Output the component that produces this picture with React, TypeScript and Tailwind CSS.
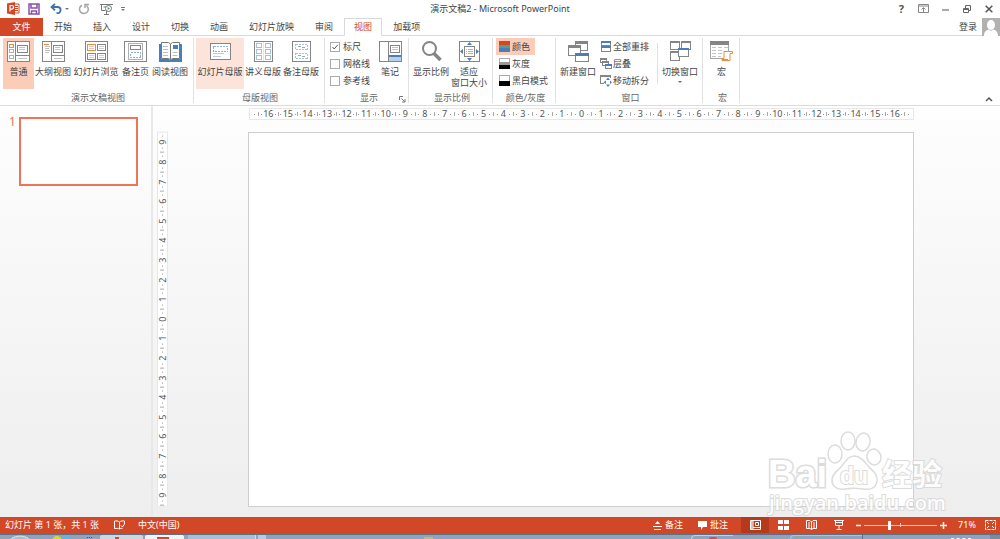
import React, { useState } from "react";
import clsx from "clsx";

const G = "#858585";
const BLUE = "#4a7ebb";
const PALE = "#8db0d8";

/* ---------- large ribbon icons, all drawn on a 23x21 grid ---------- */

const Big: React.FC<{ children: React.ReactNode }> = ({ children }) => (
  <svg width="23" height="21" viewBox="0 0 23 21" fill="none" className="shrink-0" shapeRendering="crispEdges" aria-hidden="true">
    {children}
  </svg>
);

const NormalIcon = () => (
  <Big>
    <path d="M.5.5h22v20H.5zM8.5.5v20M8.5 14.5h14" fill="#fff" stroke={G} />
    <path d="M10.500 4.500h10v7h-10z" stroke={G} />
    <path d="M12 6.500h6M12 8.500h6M11 17.500h9" stroke="#c4c4c4" />
    <path d="M2.500 3.500h4v3h-4z" stroke="#ed8b3b" />
    <path d="M2.500 8.500h4v3h-4zM2.500 14.500h4v3h-4z" stroke="#b0b0b0" />
  </Big>
);

const OutlineIcon = () => (
  <Big>
    <path d="M.5.5h22v20H.5zM9.500.5v20M9.500 14.500h13" fill="#fff" stroke={G} />
    <path d="M11.500 4.500h9v7h-9z" stroke={G} />
    <path d="M13 6.500h5M13 8.500h5M12 17.500h8M3 5.500h5M3 7.500h4M3 9.500h5M3 11.500h4" stroke="#c0c0c0" />
    <path d="M2 3.500h5" stroke="#ed8b3b" />
  </Big>
);

const SorterIcon = () => (
  <Big>
    <path d="M.5.5h22v20H.5z" fill="#fff" stroke={G} />
    <path d="M2.500 3.500h8v6h-8z" stroke="#ed8b3b" />
    <path d="M12.500 3.500h8v6h-8zM2.500 12.500h8v6h-8zM12.500 12.500h8v6h-8z" stroke={G} />
    <path d="M4 5.500h5M4 7.500h5M14 5.500h5M14 7.500h5M4 14.500h5M4 16.500h5M14 14.500h5M14 16.500h5" stroke="#cfcfcf" />
  </Big>
);

const NotesPageIcon = () => (
  <Big>
    <path d="M.5.5h22v20H.5z" fill="#fff" stroke={G} />
    <path d="M4.500 2.500h14v16h-14z" stroke="#b0b0b0" />
    <path d="M6.500 4.500h10v4h-10z" stroke={G} />
    <path d="M6.500 11.500h10v5h-10z" stroke={PALE} strokeDasharray="2 1" />
  </Big>
);

const ReadingIcon = () => (
  <svg width="23" height="21" viewBox="0 0 23 21" className="shrink-0" aria-hidden="true">
    <path d="M0 3h2v15h8l1.500 1L13 18h8V3h2v18H0z" fill={BLUE} />
    <path d="M2.500 1.500h7l2 1.500 2-1.500h7v16h-7l-2 1-2-1h-7z" fill="#fff" stroke="#777" />
    <path d="M11.500 3v15" stroke="#777" />
    <path d="M4 5.500h5M4 8.500h5M4 11.500h5M4 14.500h5M13.500 11.500h5M13.500 14.500h5" stroke="#bdbdbd" />
    <path d="M14 4h5v4h-5z" fill={BLUE} />
  </svg>
);

const SlideMasterIcon = () => (
  <Big>
    <path d="M1.500 2.500h20v16h-20z" fill="#fff" stroke={G} />
    <path d="M4.500 5.500h14v5h-14z" stroke={PALE} strokeDasharray="2 1" />
    <path d="M4 12.500h11M4 15.500h8" stroke="#bccbdf" />
  </Big>
);

const HandoutIcon = () => (
  <Big>
    <path d="M2.500.5h18v20h-18z" fill="#fff" stroke={G} />
    <path
      d="M4.500 2.500h5v4h-5zM13.500 2.500h5v4h-5zM4.500 8.500h5v4h-5zM13.500 8.500h5v4h-5zM4.500 14.500h5v4h-5zM13.500 14.500h5v4h-5z"
      stroke="#a3c0e2"
    />
    <path d="M11.500 1v19" stroke="#dde8f4" />
  </Big>
);

const NotesMasterIcon = () => (
  <Big>
    <path d="M2.500.5h18v20h-18z" fill="#fff" stroke={G} />
    <path d="M5.500 3.500h12v5h-12zM5.500 12.500h12v5h-12z" stroke="#a3c0e2" strokeDasharray="2 1" />
    <path d="M8 5.500h3M12 6.500h3M8 14.500h3M12 15.500h3" stroke="#9aa9bb" />
  </Big>
);

const NotesIcon = () => (
  <Big>
    <path d="M.5.5h22v20H.5zM9.500.5v20" fill="#fff" stroke={G} />
    <path d="M11.500 4.500h9v7h-9z" stroke={G} />
    <path d="M13 6.500h6M13 8.500h6" stroke="#c4c4c4" />
    <path d="M10 14h12v2H10z" fill={BLUE} />
    <path d="M10 16h12v4H10z" fill="#b8cfe8" />
  </Big>
);

const ZoomIcon = () => (
  <svg width="23" height="21" viewBox="0 0 23 21" fill="none" className="shrink-0" aria-hidden="true">
    <circle cx="9.500" cy="7.500" r="6.500" stroke={G} strokeWidth="2" />
    <path d="M14 12.500 20.500 19" stroke={G} strokeWidth="3.500" />
  </svg>
);

const FitIcon = () => (
  <Big>
    <path d="M1.500.5h20v20h-20z" fill="#fff" stroke={G} />
    <path d="M6.500 5.500h10v10h-10z" stroke={G} />
    <path d="M8 8.500h1M10 8.500h5M8 10.500h1M10 10.500h5M8 12.500h1M10 12.500h5" stroke="#b0b0b0" />
    <path d="m11.500 1 2.500 3H9zM11.500 20l2.500-3H9zM2 10.500 5 8v5zM21 10.500 18 8v5z" fill={BLUE} shapeRendering="auto" />
  </Big>
);

const NewWindowIcon = () => (
  <Big>
    <path d="M8.500.5h12v9h-12z" fill="#fff" stroke={G} />
    <path d="M8 0h13v3H8z" fill={G} />
    <path d="M1.500 5.500h12v9h-12z" fill="#fff" stroke={G} />
    <path d="M1 4h13v3H1z" fill={G} />
    <path d="M8.500 12.500h13v8h-13z" fill="#fff" stroke={G} />
    <path d="M8 12h14v3H8z" fill={BLUE} />
  </Big>
);

const SwitchIcon = () => (
  <Big>
    <path d="M1.500.5h9v8h-9zM12.500.5h9v8h-9zM1.500 10.500h9v9h-9z" fill="#fff" stroke={G} />
    <path d="M1 0h10v2H1zM12 0h10v2H12zM1 10h10v2H1z" fill={G} />
    <path d="M9.500 7.500h10v8h-10z" fill="#fff" stroke={G} />
    <path d="M9 7h11v2H9z" fill={BLUE} />
  </Big>
);

const MacroIcon = () => (
  <Big>
    <path d="M.5.5h18v17H.5z" fill="#fff" stroke="#a5a5a5" />
    <path d="M0 0h19v4H0z" fill={G} />
    <path d="M2 6.500h4M8 6.500h4M14 6.500h4M2 9.500h4M8 9.500h4M2 12.500h4M8 12.500h4M2 15.500h4M8 15.500h3" stroke="#c4c4c4" />
    <path d="M15 10.500h7.500v2H20v7h-8v-2h2v-7z" fill="#fff" stroke="#ed8b3b" shapeRendering="auto" />
    <path d="M12 17.500h6v2.500h-6z" fill="#ed8b3b" />
  </Big>
);

/* ---------- small ribbon icons ---------- */

const Small: React.FC<{ children: React.ReactNode }> = ({ children }) => (
  <svg width="12" height="12" viewBox="0 0 12 12" fill="none" className="shrink-0" shapeRendering="crispEdges" aria-hidden="true">
    {children}
  </svg>
);

const ColorIcon = () => (
  <Small>
    <path d="M0 0h11v4H0z" fill="#d24726" />
    <path d="M0 4h11v3H0z" fill="#5c9c86" />
    <path d="M0 7h11v4H0z" fill={BLUE} />
  </Small>
);

const GrayIcon = () => (
  <Small>
    <path d="M.5.5h10v10H.5z" fill="#fff" stroke="#aaa" />
    <path d="M0 4h11v3H0z" fill="#999" />
    <path d="M0 7h11v4H0z" fill="#000" />
  </Small>
);

const BlackWhiteIcon = () => (
  <Small>
    <path d="M.5.5h10v10H.5z" fill="#fff" stroke="#aaa" />
    <path d="M0 6h11v5H0z" fill="#000" />
  </Small>
);

const ArrangeIcon = () => (
  <Small>
    <path d="M1.500.5h9v4h-9zM1.500 6.500h9v4h-9z" fill="#fff" stroke={G} />
    <path d="M1 0h10v2H1zM1 5h10v2H1z" fill={BLUE} />
  </Small>
);

const CascadeIcon = () => (
  <Small>
    <path d="M.5.5h6v4h-6zM2.500 3.500h6v4h-6z" fill="#fff" stroke={G} />
    <path d="M0 0h7v2H0zM2 3h7v2H2z" fill={G} />
    <path d="M5.500 6.500h6v4h-6z" fill="#fff" stroke={G} />
    <path d="M5 6h7v2H5z" fill={BLUE} />
  </Small>
);

const SplitIcon = () => (
  <Small>
    <path d="M.5.5h10v8H.5z" fill="#fff" stroke={G} />
    <path d="M0 0h11v2H0z" fill={G} />
    <path d="M4 3h8v9H4z" fill="#fff" />
    <path d="M8 2.500 10 5H6zM8 12l2-2.500H6zM3.500 7.200 6 5.500v3.500zM12 7.200 10 5.500v3.500z" fill={BLUE} shapeRendering="auto" />
  </Small>
);

/* ---------- ribbon building blocks ---------- */

interface BigButtonProps {
  icon: React.ReactNode;
  label: string;
  second?: string;
  className: string;
  arrow?: boolean;
}

const BigButton: React.FC<BigButtonProps> = ({ icon, label, second, className, arrow }) => (
  <button className={clsx("flex h-[51px] shrink-0 flex-col items-center pt-[3px] leading-[11px] whitespace-nowrap", className)}>
    {icon}
    <span className="mt-1">{label}</span>
    {second && <span>{second}</span>}
    {arrow && <span className="mt-1 border-x-2 border-t-2 border-x-transparent border-t-[#666]" />}
  </button>
);

const SmallButton: React.FC<{ icon: React.ReactNode; label: string; active?: boolean }> = ({ icon, label, active }) => (
  <button className={clsx("flex h-[17px] items-center gap-px pr-[5px] pl-[3px] whitespace-nowrap", active && "bg-[#fbcdb8]")}>
    {icon}
    <span>{label}</span>
  </button>
);

const Group: React.FC<{ label: string; className: string; launcher?: boolean; children: React.ReactNode }> = ({
  label,
  className,
  launcher,
  children,
}) => (
  <section className={clsx("relative my-[2px] flex shrink-0 flex-col border-r border-[#e1e1e1]", className)}>
    <div className="flex h-[51px]">{children}</div>
    <div className="pt-[3px] text-center leading-[12px] text-[#666]">{label}</div>
    {launcher && (
      <button aria-label="显示设置" className="absolute right-[2px] bottom-0">
        <svg width="7" height="7" viewBox="0 0 7 7" fill="none" stroke="#777">
          <path d="M.5 4V.5H4M2.500 2.500l3 3M6 3v3H3" />
        </svg>
      </button>
    )}
  </section>
);

const CheckRow: React.FC<{ label: string; initial?: boolean }> = ({ label, initial = false }) => {
  const [checked, setChecked] = useState(initial);
  return (
    <label className="flex h-[17px] items-center gap-[3px] whitespace-nowrap">
      <span className="grid">
        <input
          type="checkbox"
          checked={checked}
          onChange={(e) => setChecked(e.target.checked)}
          className="col-start-1 row-start-1 h-[10px] w-[10px] appearance-none border border-[#ababab] bg-white"
        />
        {checked && (
          <svg width="10" height="10" viewBox="0 0 10 10" fill="none" stroke="#555" className="pointer-events-none col-start-1 row-start-1">
            <path d="M2.500 5 4.200 7 7.800 2.800" />
          </svg>
        )}
      </span>
      {label}
    </label>
  );
};

const Ribbon = () => (
  <div className="flex h-[70px] shrink-0 border-b border-[#dcdcdc] bg-white">
    <Group label="演示文稿视图" className="w-[194px] pl-[3px]">
      <BigButton icon={<NormalIcon />} label="普通" className="w-[31px] bg-[#fbcdb8]" />
      <BigButton icon={<OutlineIcon />} label="大纲视图" className="w-[38px]" />
      <BigButton icon={<SorterIcon />} label="幻灯片浏览" className="w-[48px]" />
      <BigButton icon={<NotesPageIcon />} label="备注页" className="w-[31px]" />
      <BigButton icon={<ReadingIcon />} label="阅读视图" className="w-[38px]" />
    </Group>
    <Group label="母版视图" className="w-[131px] pl-[2px]">
      <BigButton icon={<SlideMasterIcon />} label="幻灯片母版" className="w-[48px] bg-[#fde4db]" />
      <BigButton icon={<HandoutIcon />} label="讲义母版" className="w-[38px]" />
      <BigButton icon={<NotesMasterIcon />} label="备注母版" className="w-[38px]" />
    </Group>
    <Group label="显示" className="w-[84px] pl-[5px]" launcher>
      <div className="flex w-[48px] flex-col">
        <CheckRow label="标尺" initial />
        <CheckRow label="网格线" />
        <CheckRow label="参考线" />
      </div>
      <BigButton icon={<NotesIcon />} label="笔记" className="w-[24px]" />
    </Group>
    <Group label="显示比例" className="w-[84px] pl-[3px]">
      <BigButton icon={<ZoomIcon />} label="显示比例" className="w-[38px]" />
      <BigButton icon={<FitIcon />} label="适应" second="窗口大小" className="w-[38px]" />
    </Group>
    <Group label="颜色/灰度" className="w-[63px] pl-[3px]">
      <div className="flex flex-col items-start">
        <SmallButton icon={<ColorIcon />} label="颜色" active />
        <SmallButton icon={<GrayIcon />} label="灰度" />
        <SmallButton icon={<BlackWhiteIcon />} label="黑白模式" />
      </div>
    </Group>
    <Group label="窗口" className="w-[147px] pl-[3px]">
      <BigButton icon={<NewWindowIcon />} label="新建窗口" className="w-[38px]" />
      <div className="flex flex-col items-start">
        <SmallButton icon={<ArrangeIcon />} label="全部重排" />
        <SmallButton icon={<CascadeIcon />} label="层叠" />
        <SmallButton icon={<SplitIcon />} label="移动拆分" />
      </div>
      <div className="my-[5px] ml-[3px] border-l border-[#e1e1e1]" />
      <BigButton icon={<SwitchIcon />} label="切换窗口" className="ml-[3px] w-[38px]" arrow />
    </Group>
    <Group label="宏" className="w-[37px] pl-[3px]">
      <BigButton icon={<MacroIcon />} label="宏" className="w-[31px]" />
    </Group>
    <button aria-label="折叠功能区" className="mt-auto mr-[7px] mb-[3px] ml-auto">
      <svg width="8" height="6" viewBox="0 0 8 6" fill="none" stroke="#555" strokeWidth="1.500">
        <path d="m1 5 3-3 3 3" />
      </svg>
    </button>
  </div>
);

/* ---------- title bar and tabs ---------- */

const TitleBar = () => (
  <header className="grid h-[18px] shrink-0 grid-cols-[1fr_auto_1fr] items-center bg-white">
    <div className="flex items-center pb-px pl-[7px]">
      <svg width="13" height="13" viewBox="0 0 13 13" aria-hidden="true">
        <path d="M7 2h5v9H7z" fill="#fff" stroke="#d24726" />
        <path d="M8 4.500h3M8 6.500h3M8 8.500h3" stroke="#d24726" />
        <path d="M0 1.500 8 0v13L0 11.500z" fill="#d24726" />
        <path d="M3 9.500v-6h1.700a1.700 1.700 0 0 1 0 3.600H3" fill="none" stroke="#fff" strokeWidth="1.200" />
      </svg>
      <button aria-label="保存" className="ml-[8px]">
        <svg width="12" height="12" viewBox="0 0 12 12" fill="none" stroke="#8a50a8" strokeWidth="1.500">
          <path d="M1 1h10v10H1zM3 1v4h6V1M3.500 11V8h5v3" />
        </svg>
      </button>
      <button aria-label="撤消" className="ml-[10px]">
        <svg width="12" height="12" viewBox="0 0 12 12" fill="none" stroke="#3f72ad" strokeWidth="1.800">
          <path d="M5 .8 1.500 4 5 7.300M2 4h5.500a3 3 0 0 1 0 6.200H6.500" />
        </svg>
      </button>
      <span className="ml-[3px] border-x-2 border-t-2 border-x-transparent border-t-[#777]" />
      <button aria-label="恢复" className="ml-[9px]">
        <svg width="12" height="12" viewBox="0 0 12 12" fill="none" stroke="#a5a5a5" strokeWidth="1.500">
          <path d="M4 2.200a4.400 4.400 0 1 0 4.500.4M7 5V1.500h4" />
        </svg>
      </button>
      <button aria-label="从头开始放映" className="ml-[10px]">
        <svg width="13" height="12" viewBox="0 0 13 12" fill="none" stroke="#777">
          <path d="M0 1.500h13M1.500 1.500v6h4M6.500 8v3M4 11.500h5M3.500 4h3" />
          <circle cx="8.500" cy="5.500" r="3" fill="#fff" />
          <path d="m7.700 4 2.300 1.500-2.300 1.500z" fill="#3f9b6c" stroke="none" />
        </svg>
      </button>
      <span className="ml-[8px] flex flex-col items-center gap-px">
        <span className="w-1 border-t border-[#777]" />
        <span className="border-x-2 border-t-2 border-x-transparent border-t-[#777]" />
      </span>
    </div>
    <h1 className="pb-px text-[#444]">演示文稿2 - Microsoft PowerPoint</h1>
    <div className="flex items-center justify-end pr-[7px] pb-px text-[#555]">
      <button className="text-[11px] leading-[14px] font-bold">?</button>
      <button aria-label="功能区显示选项" className="ml-[14px]">
        <svg width="11" height="9" viewBox="0 0 11 9" fill="none" stroke="#888">
          <path d="M.5.5h10v8H.5zM1 2h9M5.500 8V4M3.500 5.500l2-2 2 2" />
        </svg>
      </button>
      <button aria-label="最小化" className="ml-[13px]">
        <svg width="7" height="9" viewBox="0 0 7 9" stroke="#555">
          <path d="M0 6h7" />
        </svg>
      </button>
      <button aria-label="还原" className="ml-[14px]">
        <svg width="8" height="8" viewBox="0 0 8 8" fill="none" stroke="#666">
          <path d="M.5 3.500h5v4h-5zM2.500 3V.5h5v5H6M.5 4.500h5" />
        </svg>
      </button>
      <button aria-label="关闭" className="ml-[14px]">
        <svg width="8" height="8" viewBox="0 0 8 8" stroke="#555" strokeWidth="1.500">
          <path d="m.7.7 6.600 6.600M7.300.7.7 7.300" />
        </svg>
      </button>
    </div>
  </header>
);

const TABS = ["开始", "插入", "设计", "切换", "动画", "幻灯片放映", "审阅", "视图", "加载项"];

const TabBar = () => {
  const [active, setActive] = useState("视图");
  return (
    <nav className="flex h-[18px] shrink-0 border-b border-[#d9d9d9] bg-white">
      <button className="mr-px h-[18px] w-[43px] bg-[#d24726] text-white">文件</button>
      <div className="flex gap-px">
        {TABS.map((tab) => (
          <button
            key={tab}
            onClick={() => setActive(tab)}
            className={clsx(
              "h-[18px] border px-[9px] whitespace-nowrap",
              tab === active ? "border-[#d9d9d9] border-b-white bg-white text-[#d24726]" : "border-transparent"
            )}
          >
            {tab}
          </button>
        ))}
      </div>
      <button className="ml-auto pr-[5px]">登录</button>
      <svg width="18" height="18" viewBox="0 0 18 18" className="shrink-0" aria-hidden="true">
        <path d="M0 0h18v18H0z" fill="#b1b1b1" />
        <ellipse cx="9" cy="7" rx="4" ry="5" fill="#fff" />
        <path d="M2 18c0-4 2-6 5-6.500l2 1.500 2-1.500c3 .5 5 2.500 5 6.500z" fill="#fff" />
      </svg>
    </nav>
  );
};

/* ---------- work area ---------- */

const range = (n: number) => Array.from({ length: 2 * n + 1 }, (_, i) => Math.abs(i - n));

const Dot = () => <span className="h-px w-px shrink-0 bg-[#999]" />;

const HorizontalRuler = () => (
  <div className="flex h-[12px] items-center border border-[#e8e8e8] bg-white px-[4px] text-[9px] leading-[10px] text-[#555]">
    <Dot />
    <div className="ml-[3px] flex flex-1 items-center">
      {range(16).map((n, i) => (
        <div key={i} className="flex min-w-0 flex-1 basis-0 items-center justify-between">
          <span className="h-[4px] w-px shrink-0 bg-[#aaa]" />
          <Dot />
          <span>{n}</span>
          <Dot />
          <span />
        </div>
      ))}
      <span className="h-[4px] w-px shrink-0 bg-[#aaa]" />
    </div>
    <span className="ml-[3px] h-px w-px bg-[#999]" />
  </div>
);

const VerticalRuler = () => (
  <div className="flex w-[11px] rotate-180 flex-col border border-[#e8e8e8] bg-white text-[9px] leading-[9px] text-[#555]">
    {range(9).map((n, i) => (
      <div key={i} className="flex min-h-0 flex-1 basis-0 flex-col items-center justify-between">
        <span className="h-px w-[4px] shrink-0 bg-[#aaa]" />
        <Dot />
        <span className="[writing-mode:vertical-rl]">{n}</span>
        <Dot />
        <span />
      </div>
    ))}
  </div>
);

const Watermark = () => (
  <svg
    width="190"
    height="92"
    viewBox="0 0 190 92"
    className="pointer-events-none absolute right-[48px] bottom-0 opacity-85"
    fill="#fff"
    stroke="#d6d6d6"
    strokeWidth="1.500"
    fontWeight="700"
  >
    <text x="6" y="62" fontSize="38" fontFamily="'Liberation Sans', Arial, sans-serif" strokeWidth="3" paintOrder="stroke">
      Bai
    </text>
    <ellipse cx="73" cy="29" rx="7" ry="9" />
    <ellipse cx="86" cy="16" rx="7" ry="9" />
    <ellipse cx="101" cy="17" rx="7" ry="9" transform="rotate(12 101 17)" />
    <ellipse cx="112" cy="32" rx="7" ry="8" transform="rotate(-15 112 32)" />
    <path d="M92 31c7 0 11 6 15 11 5 5 9 8 8 14-1 8-8 9-14 8-6-1-12-1-18 0-6 1-13-1-13-9 0-6 5-9 9-13 4-5 7-11 13-11z" />
    <text x="78" y="59" fontSize="23" fontFamily="'Liberation Sans', Arial, sans-serif" strokeWidth="2" paintOrder="stroke">
      du
    </text>
    <text x="120" y="60" fontSize="30" fontFamily="'Noto Sans CJK SC', sans-serif" strokeWidth="2" paintOrder="stroke">
      经验
    </text>
    <text x="7" y="85" fontSize="20" fontWeight="600" fontFamily="'Open Sans', sans-serif" strokeWidth="2" paintOrder="stroke">
      jingyan.baidu.com
    </text>
  </svg>
);

const Workspace = () => (
  <main className="relative flex min-h-0 flex-1 overflow-hidden bg-linear-to-b from-[#fefefe] to-[#eeeeee]">
    <aside className="flex w-[153px] shrink-0 items-start border-r-2 border-[#e8e8e8] pt-[11px] pl-[9px]">
      <span className="w-[10px] text-[12px] leading-[10px] text-[#e8735a]">1</span>
      <button aria-label="幻灯片 1" className="h-[69px] w-[119px] border-2 border-[#f0745a] bg-white" />
    </aside>
    <div className="flex-1 pt-[2px] pl-[4px]">
      <div className="pr-[86px] pl-[92px]">
        <HorizontalRuler />
      </div>
      <div className="mt-[12px] flex pr-[86px]">
        <VerticalRuler />
        <div className="ml-[80px] aspect-video flex-1 border border-[#cfcfcf] bg-white" />
      </div>
    </div>
    <Watermark />
  </main>
);

/* ---------- status bar ---------- */

const StatusBar = () => {
  const [zoom, setZoom] = useState(71);
  return (
    <footer className="flex h-[17px] shrink-0 items-center bg-[#d24726] pb-px pl-[5px] whitespace-nowrap text-white">
      <span>幻灯片 第 1 张，共 1 张</span>
      <button aria-label="拼写检查" className="ml-[15px]">
        <svg width="11" height="10" viewBox="0 0 11 10" fill="none" stroke="#fff">
          <path d="M5.500 2v7M5.500 2C4 .8 2 .8.500 1v7.500c2-.2 4-.2 5 .5 1-.7 2-.7 3-.6M5.500 2C7 .8 9 .8 10.500 1v3M7 5.500 8.500 7l2-3" />
        </svg>
      </button>
      <button className="ml-[13px]">中文(中国)</button>
      <button className="ml-auto flex items-center gap-[3px]">
        <svg width="9" height="9" viewBox="0 0 9 9" aria-hidden="true">
          <path d="M4.500 0 7 3H2z" fill="#fff" />
          <path d="M0 5.500h9M1 8.500h7" stroke="#fff" />
        </svg>
        备注
      </button>
      <button className="ml-[15px] flex items-center gap-[3px]">
        <svg width="9" height="9" viewBox="0 0 9 9" fill="#fff" aria-hidden="true">
          <path d="M0 0h9v6H5L3 9V6H0z" />
        </svg>
        批注
      </button>
      <div className="ml-[13px] flex h-full">
        <button aria-label="普通视图" className="flex h-full w-[28px] items-center justify-center bg-[#b5391b]">
          <svg width="11" height="10" viewBox="0 0 11 10" fill="none" stroke="#fff">
            <path d="M.5.5h10v9H.5zM3 .5v9M5.500 2.500h3v3h-3zM3 7.500h7M1.800 1v8" />
          </svg>
        </button>
        <button aria-label="幻灯片浏览" className="flex h-full w-[28px] items-center justify-center">
          <svg width="11" height="10" viewBox="0 0 11 10" fill="#fff">
            <path d="M0 0h5v4H0zM6 0h5v4H6zM0 6h5v4H0zM6 6h5v4H6z" />
          </svg>
        </button>
        <button aria-label="阅读视图" className="flex h-full w-[28px] items-center justify-center">
          <svg width="11" height="10" viewBox="0 0 11 10" fill="none" stroke="#fff">
            <path d="M.5.5h3.500L5.500 2 7 .5h3.500v8H7L5.500 9.500 4 8.500H.5zM5.500 2v7M2 3h2M2 5h2M2 7h2M7 3h2M7 5h2M7 7h2" />
          </svg>
        </button>
        <button aria-label="幻灯片放映" className="flex h-full w-[28px] items-center justify-center">
          <svg width="10" height="10" viewBox="0 0 10 10" fill="none" stroke="#fff">
            <path d="M0 .5h10M1.500 1v4.500h7V1M5 5.500v4M2.500 9.500h5M1.500 2.500h7" />
          </svg>
        </button>
      </div>
      <button aria-label="缩小" className="ml-[3px]">
        <svg width="5" height="5" viewBox="0 0 5 5">
          <path d="M0 2.500h5" stroke="#fff" strokeWidth="1.500" />
        </svg>
      </button>
      <input
        type="range"
        aria-label="显示比例"
        min={10}
        max={190}
        value={zoom}
        onChange={(e) => setZoom(Number(e.target.value))}
        className="mx-[3px] h-[11px] w-[73px] appearance-none bg-[linear-gradient(#f3c5b9,#f3c5b9),linear-gradient(#f3c5b9,#f3c5b9)] bg-[size:100%_1px,1px_4px] bg-center bg-no-repeat [&::-webkit-slider-thumb]:h-[9px] [&::-webkit-slider-thumb]:w-[3px] [&::-webkit-slider-thumb]:appearance-none [&::-webkit-slider-thumb]:bg-white"
      />
      <button aria-label="放大">
        <svg width="7" height="7" viewBox="0 0 7 7">
          <path d="M0 3.500h7M3.500 0v7" stroke="#fff" strokeWidth="1.500" />
        </svg>
      </button>
      <button className="ml-[10px] w-[20px]">{zoom}%</button>
      <button aria-label="适应窗口" className="mr-[4px] ml-[8px]">
        <svg width="11" height="10" viewBox="0 0 11 10" fill="none" stroke="#fff">
          <path strokeDasharray="3 1" d="M.5.5h10v9H.5z" />
          <path d="m2 2 2 2M9 2 7 4M2 8l2-2M9 8 7 6" />
        </svg>
      </button>
    </footer>
  );
};

// only the top edge of the desktop taskbar is visible under the window
const Taskbar = () => (
  <div className="flex h-[5px] shrink-0 items-stretch overflow-hidden border-t border-[#5f7184] bg-[#8fa3bd]">
    <svg width="100" height="4" viewBox="0 0 100 4" className="shrink-0" aria-hidden="true">
      <ellipse cx="20" cy="8" rx="11" ry="7" fill="#a9c0d3" stroke="#dce6ee" />
      <circle cx="57" cy="6" r="5" fill="#d5dc2c" />
      <circle cx="66" cy="6" r="5" fill="#5cb6ea" />
      <path d="M87 2.500h6" stroke="#41546b" strokeDasharray="1 1" />
    </svg>
    <div className="flex w-[43px] shrink-0 justify-center rounded-t-xs bg-[#cdd6e1]">
      <span className="mt-[2px] mr-[10px] w-[4px] bg-[#d8423a]" />
    </div>
    <div className="ml-[2px] flex w-[39px] shrink-0 justify-center rounded-t-xs bg-[#f1f4f7]">
      <span className="mt-[2px] mr-[4px] w-[12px] bg-[#d24726]" />
    </div>
    <div className="ml-[4px] w-[68px] shrink-0 border-r border-[#d3dde8] bg-[#a9bfd8]" />
    <div className="ml-[2px] w-[8px] shrink-0 bg-[#b9cbe0]" />
    <div className="ml-[158px] w-[9px] shrink-0 border-t-2 border-[#8fa3bd] bg-[#c5b679]" />
    <div className="ml-auto flex w-[42px] justify-center rounded-tl border-t border-l border-[#c4d0dd]">
      <span className="mt-px w-[8px] rounded-t bg-[#dd4b42]" />
    </div>
    <div className="ml-[57px] w-[72px] rounded-tl border-t border-l border-[#b3c2d3]" />
    <div className="flex w-[128px] border-l border-[#5f7184]">
      <span className="mt-[3px] ml-[88px] w-[20px] border-t border-dashed border-[#f4f7fa]" />
    </div>
    <div className="w-[10px] bg-[#7b8b9d]" />
  </div>
);

export default function App() {
  return (
    <div className="flex h-screen flex-col overflow-hidden bg-white font-['Noto_Sans','Noto_Sans_CJK_SC',sans-serif] text-[9px] leading-[12px] text-[#444]">
      <TitleBar />
      <TabBar />
      <Ribbon />
      <Workspace />
      <StatusBar />
      <Taskbar />
    </div>
  );
}
